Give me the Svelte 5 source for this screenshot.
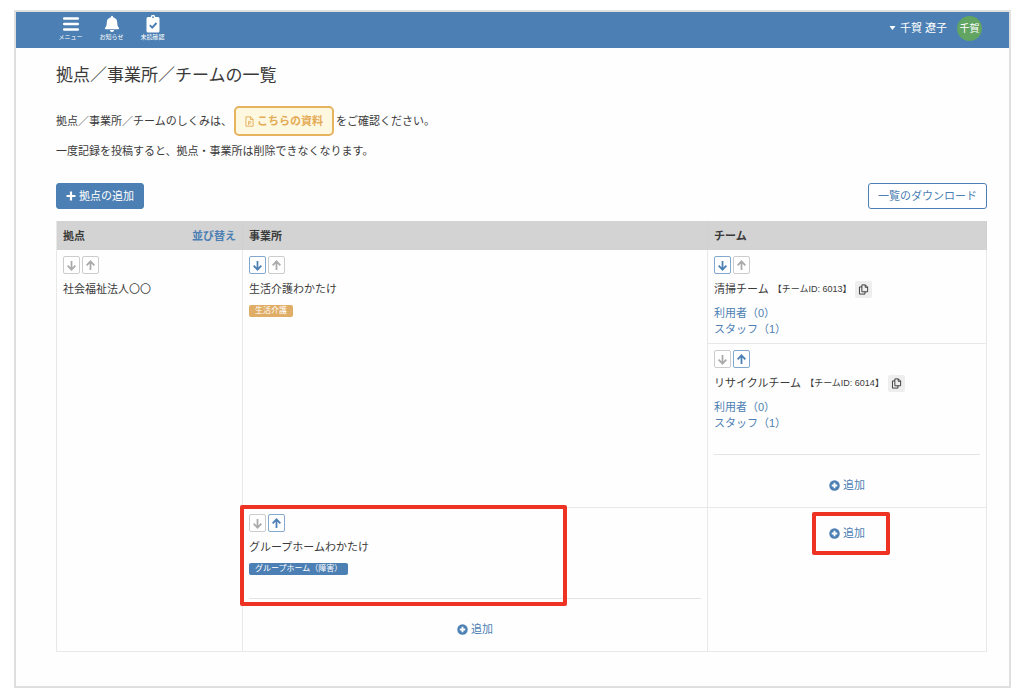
<script>
  const navItems = [
    { icon: 'menu', label: 'メニュー' },
    { icon: 'bell', label: 'お知らせ' },
    { icon: 'clipboard', label: '未読確認' }
  ];
  const teams = [
    { name: '清掃チーム', id: '6013', users: 0, staff: 1, down: true, up: false },
    { name: 'リサイクルチーム', id: '6014', users: 0, staff: 1, down: false, up: true }
  ];
</script>

{#snippet movers(down, up)}
  <div class="movers">
    <button class="move" type="button" disabled={!down} aria-label="下へ">
      <svg viewBox="0 0 10 10"><path d="M5 .8v8M1.5 5.2 5 8.8l3.5-3.6" /></svg>
    </button>
    <button class="move" type="button" disabled={!up} aria-label="上へ">
      <svg viewBox="0 0 10 10"><path d="M5 9.2v-8M1.5 4.8 5 1.2l3.5 3.6" /></svg>
    </button>
  </div>
{/snippet}

{#snippet addLink()}
  <a class="add" href="#add">
    <svg viewBox="0 0 12 12"><circle cx="6" cy="6" r="5.7" fill="currentColor" /><path d="M6 3v6M3 6h6" stroke="#fff" stroke-width="2" /></svg>
    <span>追加</span>
  </a>
{/snippet}

{#snippet teamInfo(team)}
  {@render movers(team.down, team.up)}
  <div class="name team-name">
    <span>{team.name}</span>
    <span class="team-id">【チームID: {team.id}】</span>
    <button class="copy" type="button" aria-label="コピー">
      <svg viewBox="0 0 12 12"><path d="M4.2 1h3.9l2.4 2.4v5.1H4.2zM7.9 1v2.6h2.6M4.2 3.2H1.6V11h6V8.5" /></svg>
    </button>
  </div>
  <div class="links">
    <a href="#users">利用者（{team.users}）</a>
    <a href="#staff">スタッフ（{team.staff}）</a>
  </div>
{/snippet}

<div class="frame">
  <header>
    <nav>
      {#each navItems as item}
        <a href="#{item.icon}">
          {#if item.icon === 'menu'}
            <svg viewBox="0 0 18 18"><path d="M2.2 3.500h13.600M2.200 9h13.600M2.200 14.500h13.600" stroke="currentColor" stroke-width="2.500" stroke-linecap="round" /></svg>
          {:else if item.icon === 'bell'}
            <svg viewBox="0 0 18 18"><path fill="currentColor" d="M8 2.200V1.800a1 1 0 0 1 2 0v.4c2.600.5 4.200 2.500 4.200 5 0 3.200.7 4.400 1.700 5.500.5.6.1 1.500-.7 1.500H2.800c-.8 0-1.200-.9-.7-1.500 1-1.100 1.700-2.300 1.700-5.500 0-2.500 1.600-4.500 4.200-5zM6.900 15h4.200a2.100 2.100 0 0 1-4.200 0z" /></svg>
          {:else}
            <svg viewBox="0 0 18 18"><path fill="currentColor" d="M4 2h2.800a2.200 2.200 0 0 1 4.400 0H14a1.500 1.500 0 0 1 1.500 1.500v12.500a1.500 1.500 0 0 1-1.500 1.500H4a1.500 1.500 0 0 1-1.500-1.500V3.500A1.500 1.500 0 0 1 4 2z" /><circle cx="9" cy="2.200" r=".9" fill="#4c7fb3" /><path d="M5.800 10.200l2.400 2.400 4.300-4.600" fill="none" stroke="#4c7fb3" stroke-width="1.900" /></svg>
          {/if}
          <span>{item.label}</span>
        </a>
      {/each}
    </nav>
    <button class="account" type="button">
      <svg class="caret" viewBox="0 0 6 4"><path d="M0 0h6L3 4z" fill="currentColor" /></svg>
      <span>千賀 遼子</span>
      <span class="avatar">千賀</span>
    </button>
  </header>

  <main>
    <h1>拠点／事業所／チームの一覧</h1>
    <p class="guide">
      拠点／事業所／チームのしくみは、
      <a class="doc" href="#document">
        <svg viewBox="0 0 10 12"><path d="M1 .8h5.200L9 3.600v7.600H1zM6 .8v3h3M4 9.800V5.800h1.300a1.100 1.100 0 0 1 0 2.300H4" /></svg>
        <span>こちらの資料</span>
      </a>
      をご確認ください。
    </p>
    <p class="note">一度記録を投稿すると、拠点・事業所は削除できなくなります。</p>

    <div class="toolbar">
      <button class="primary" type="button">
        <svg viewBox="0 0 10 10"><path d="M5 .5v9M.5 5h9" stroke="currentColor" stroke-width="2.200" /></svg>
        <span>拠点の追加</span>
      </button>
      <button class="outline" type="button">一覧のダウンロード</button>
    </div>

    <table>
      <colgroup><col class="c-base" /><col class="c-office" /><col class="c-team" /></colgroup>
      <thead>
        <tr>
          <th scope="col"><div class="head"><span>拠点</span><a href="#sort">並び替え</a></div></th>
          <th scope="col">事業所</th>
          <th scope="col">チーム</th>
        </tr>
      </thead>
      <tbody>
        <tr>
          <td rowspan="3">
            {@render movers(false, false)}
            <div class="name">社会福祉法人〇〇</div>
          </td>
          <td rowspan="2">
            {@render movers(true, false)}
            <div class="name">生活介護わかたけ</div>
            <span class="badge care">生活介護</span>
          </td>
          <td>{@render teamInfo(teams[0])}</td>
        </tr>
        <tr>
          <td>
            {@render teamInfo(teams[1])}
            <hr />
            {@render addLink()}
          </td>
        </tr>
        <tr>
          <td class="marked">
            {@render movers(false, true)}
            <div class="name">グループホームわかたけ</div>
            <span class="badge home">グループホーム（障害）</span>
            <hr />
            {@render addLink()}
            <div class="mark mark-office"></div>
          </td>
          <td class="marked add-only">
            {@render addLink()}
            <div class="mark mark-add"></div>
          </td>
        </tr>
      </tbody>
    </table>
  </main>
</div>

<style>
  :global(body) {
    margin: 0;
    background: #fff;
  }
  .frame {
    display: flow-root;
    margin: 10px 13px 10px 14px;
    border: 2px solid #dfdfdf;
    background: #fefefe;
    color: #3a3a3a;
    font: 11px/18px "Liberation Sans", "Noto Sans CJK JP", sans-serif;
  }
  a {
    color: #4c7fb3;
    text-decoration: none;
  }
  button {
    font: inherit;
    cursor: pointer;
  }
  svg {
    display: block;
    flex: none;
    fill: none;
  }
  header {
    display: flex;
    align-items: center;
    justify-content: space-between;
    box-sizing: border-box;
    height: 36px;
    padding: 0 27px 4px 34px;
    background: #4c7fb3;
  }
  nav {
    display: flex;
  }
  nav a {
    display: flex;
    flex-direction: column;
    align-items: center;
    width: 41px;
    color: #fff;
    font-size: 6px;
    line-height: 9px;
  }
  nav svg {
    width: 18px;
    height: 18px;
  }
  .account {
    display: flex;
    align-items: center;
    gap: 4px;
    padding: 0;
    border: 0;
    background: none;
    color: #fff;
  }
  .caret {
    width: 7px;
    height: 4px;
  }
  .avatar {
    width: 25px;
    margin-left: 6px;
    border-radius: 50%;
    background: #62a562;
    font-size: 10px;
    line-height: 25px;
    text-align: center;
  }
  main {
    padding: 16px 22px 34px 40px;
  }
  h1 {
    margin: 0;
    font-size: 17px;
    font-weight: 400;
    line-height: 24px;
  }
  p {
    margin: 0;
  }
  .guide {
    display: flex;
    align-items: center;
    gap: 2px;
    margin-top: 18px;
  }
  .doc {
    display: flex;
    align-items: center;
    gap: 3px;
    padding: 4px 9px;
    border: 2px solid #e6b35f;
    border-radius: 5px;
    background: #fff8e1;
    color: #e3ab55;
    font-weight: 700;
  }
  .doc svg {
    width: 9px;
    height: 11px;
    stroke: currentColor;
  }
  .note {
    margin-top: 6px;
  }
  .toolbar {
    display: flex;
    justify-content: space-between;
    margin: 23px 0 12px;
  }
  .toolbar button {
    display: flex;
    align-items: center;
    gap: 3px;
    padding: 3px 9px;
    border: 1px solid #4c7fb3;
    border-radius: 3px;
  }
  .toolbar .primary {
    background: #4c7fb3;
    color: #fff;
  }
  .toolbar .outline {
    background: #fff;
    color: #4c7fb3;
  }
  .primary svg {
    width: 10px;
    height: 10px;
  }
  table {
    width: 100%;
    table-layout: fixed;
    border-collapse: separate;
    border-spacing: 0;
    border-left: 1px solid #e8e8e8;
  }
  .c-base {
    width: 20%;
  }
  .c-office {
    width: 50%;
  }
  .c-team {
    width: 30%;
  }
  th {
    padding: 6px 6px 5px;
    background: #d3d3d3;
    border-right: 1px solid #d0d0d0;
    text-align: left;
  }
  .head {
    display: flex;
    justify-content: space-between;
  }
  td {
    padding: 6px;
    border-right: 1px solid #e8e8e8;
    border-bottom: 1px solid #e8e8e8;
    vertical-align: top;
  }
  .movers {
    display: flex;
    gap: 2px;
    margin-bottom: 6px;
  }
  .move {
    display: grid;
    place-items: center;
    width: 17px;
    height: 18px;
    padding: 0;
    border: 1px solid #82a8d0;
    border-radius: 2px;
    background: #fff;
    color: #4c7fb3;
  }
  .move:disabled {
    border-color: #ccc;
    color: #aaa;
    cursor: default;
  }
  .move svg {
    width: 11px;
    height: 11px;
    stroke: currentColor;
    stroke-width: 1.6;
  }
  .team-name {
    display: flex;
    align-items: center;
    gap: 4px;
  }
  .team-id {
    font-size: 9px;
  }
  .copy {
    display: grid;
    place-items: center;
    width: 17px;
    height: 17px;
    padding: 0;
    border: 0;
    border-radius: 2px;
    background: #eee;
    color: #333;
  }
  .copy svg {
    width: 11px;
    height: 11px;
    stroke: currentColor;
  }
  .links {
    display: flex;
    flex-direction: column;
    align-items: flex-start;
    margin-top: 7px;
    line-height: 16px;
  }
  .badge {
    display: block;
    width: fit-content;
    margin-top: 7px;
    padding: 0 6px;
    border-radius: 2px;
    color: #fff;
    font-size: 8px;
    line-height: 12px;
  }
  .care {
    background: #dfad66;
  }
  .home {
    background: #4c7fb3;
  }
  hr {
    margin: 23px 0 22px;
    border: 0;
    border-top: 1px solid #e4e4e4;
  }
  .add {
    display: flex;
    align-items: center;
    justify-content: center;
    gap: 3px;
    margin-bottom: 8px;
    line-height: 16px;
  }
  .add svg {
    width: 11px;
    height: 11px;
  }
  .add-only {
    padding-top: 17px;
  }
  .marked {
    position: relative;
  }
  .mark {
    position: absolute;
    box-sizing: border-box;
    border: 4px solid #ee3224;
    border-radius: 2px;
    pointer-events: none;
  }
  .mark-office {
    top: -3px;
    left: -3px;
    width: 327px;
    height: 101px;
  }
  .mark-add {
    top: 4px;
    left: calc(50% - 35px);
    width: 78px;
    height: 43px;
  }
</style>
